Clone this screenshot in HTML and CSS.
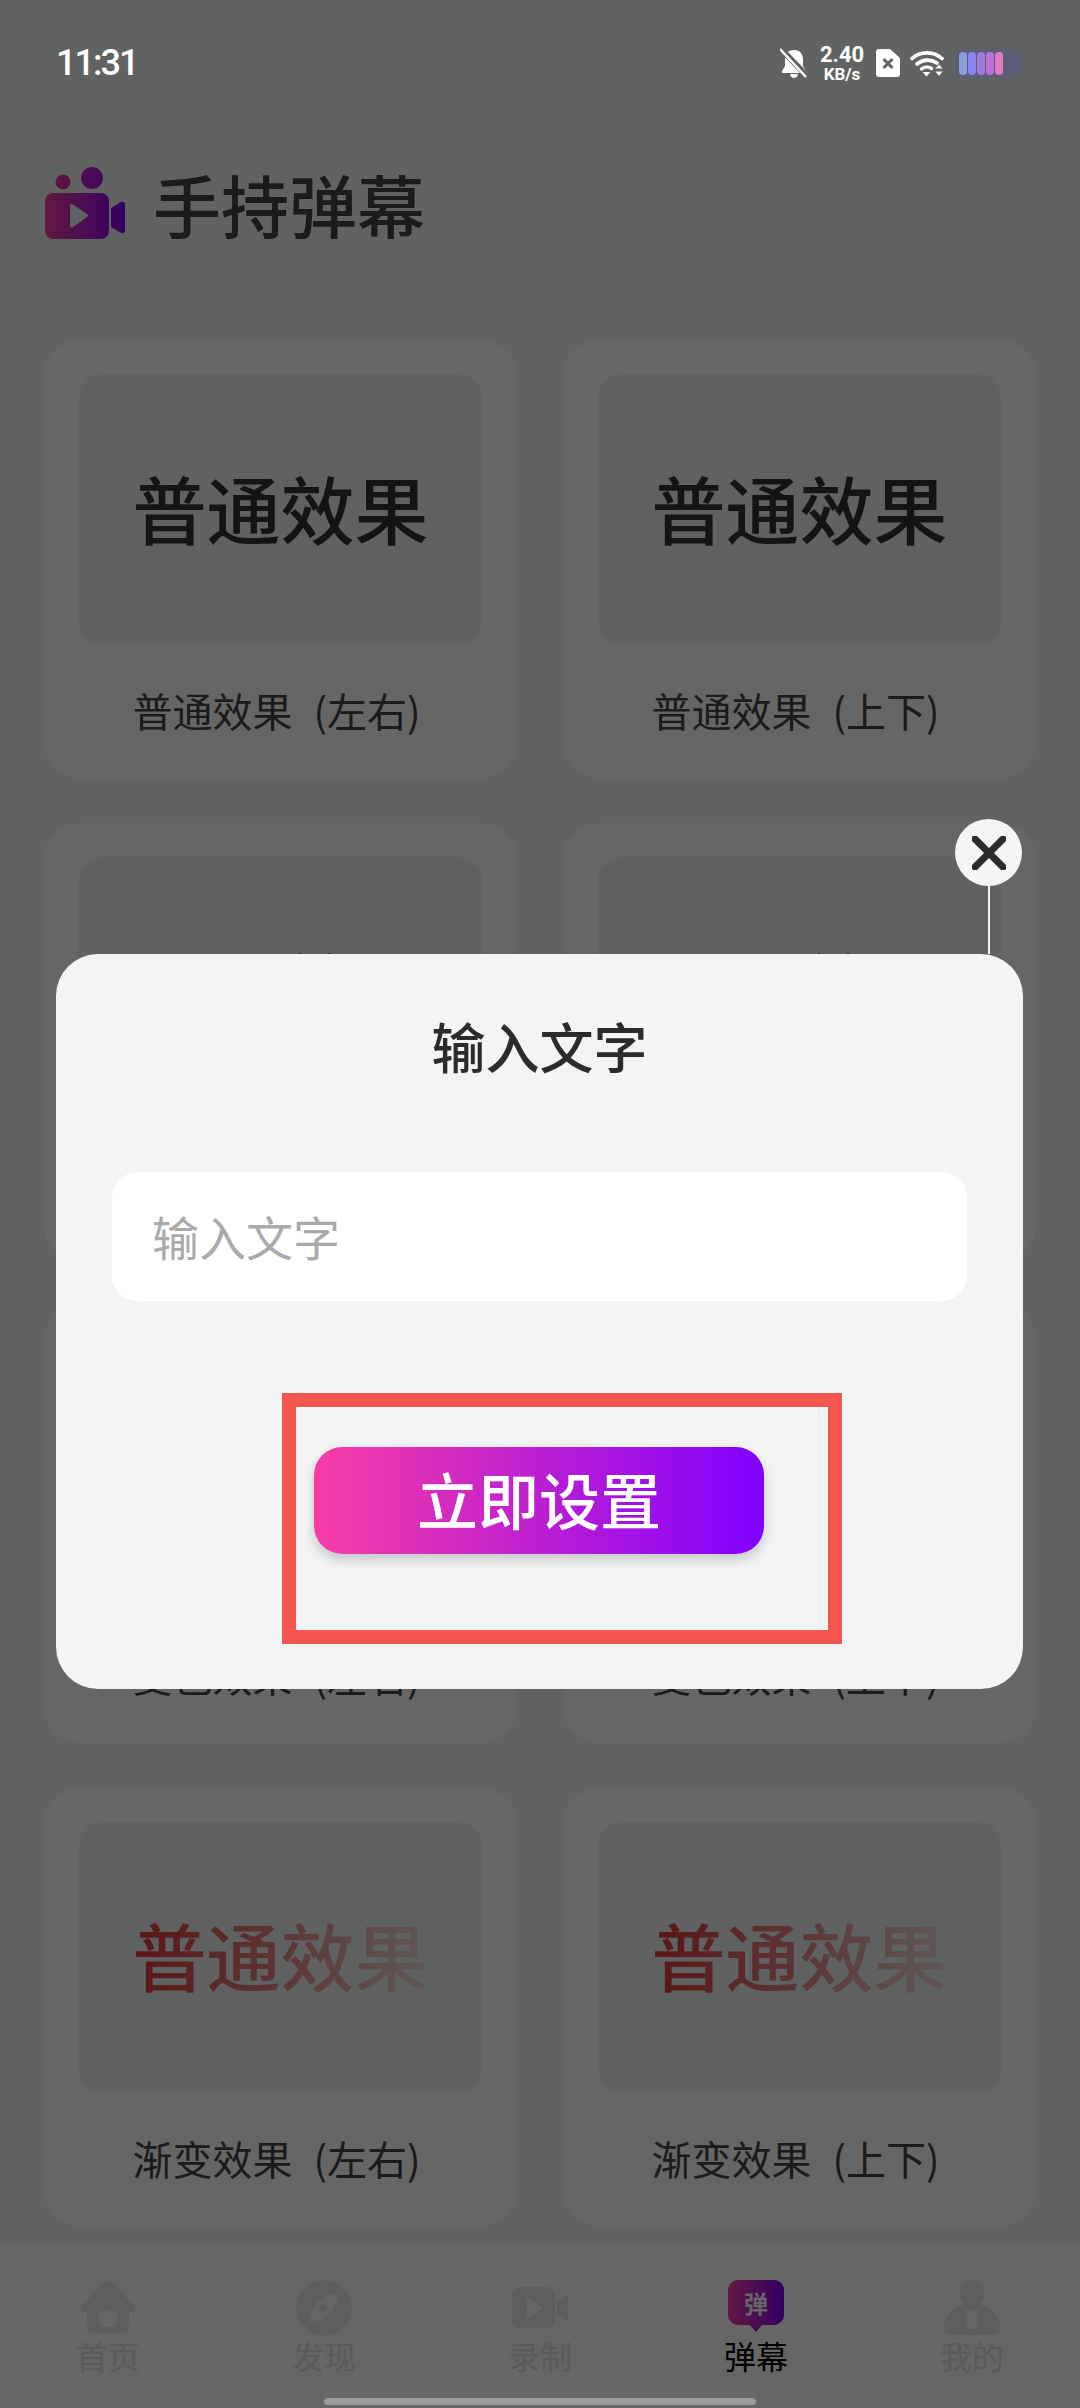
FILE: index.html
```html
<!DOCTYPE html>
<html lang="zh-CN">
<head>
    <meta charset="UTF-8">
    <meta name="viewport" content="width=device-width, initial-scale=1.0">
    <title>手持弹幕</title>
    <link rel="stylesheet" href="styles.css">
</head>
<body>
    <div class="page">
        <div class="status">
            <span class="time">11:31</span>
            <div class="status-icons">
                <svg class="ic-bell" width="28" height="30" viewBox="0 0 28 30">
                    <path d="M14 2c6 0 9 4 9 10v6l3 5c.6 1.3 0 2-1 2H3c-1 0-1.6-.7-1-2l3-5v-6c0-6 3-10 9-10z" fill="#fff"/>
                    <path d="M10 26c.5 2.500 2 4 4 4s3.500-1.500 4-4z" fill="#fff"/>
                    <path d="M1 1l26 27" stroke="#616362" stroke-width="6"/>
                    <path d="M0 1l26 28" stroke="#fff" stroke-width="2.500"/>
                </svg>
                <div class="speed"><b>2.40</b><span>KB/s</span></div>
                <svg width="24" height="28" viewBox="0 0 24 28">
                    <path d="M3 0h11l10 9v16a3 3 0 0 1-3 3H3a3 3 0 0 1-3-3V3a3 3 0 0 1 3-3z" fill="#fff"/>
                    <path d="M7.500 10l9 9M16.500 10l-9 9" stroke="#616362" stroke-width="3"/>
                </svg>
                <svg width="34" height="28" viewBox="0 0 34 28" fill="none">
                    <path d="M2 9.500C10 2 24 2 32 9.500" stroke="#fff" stroke-width="3.600" stroke-linecap="round"/>
                    <path d="M7 15c6-5 14-5 20-1" stroke="#fff" stroke-width="3.600" stroke-linecap="round"/>
                    <path d="M11.500 20c3-2.500 7-2.500 10-.5" stroke="#fff" stroke-width="3.400" stroke-linecap="round"/>
                    <path d="M12.500 23h8l-4 4.500zM29 15.500l3.500 4h-7zM25.500 22.500h7L29 27z" fill="#fff"/>
                </svg>
                <div class="battery">
                    <i class="b1"></i><i class="b2"></i><i class="b3"></i><i class="b4"></i><i class="b5"></i>
                </div>
            </div>
        </div>

        <header class="top">
            <svg class="logo" width="80" height="72" viewBox="0 0 80 72">
                <defs>
                    <linearGradient id="logoGrad" x1="0" y1="0" x2="1" y2="0">
                        <stop offset="0" stop-color="#f83ea0"/>
                        <stop offset="1" stop-color="#7f00ff"/>
                    </linearGradient>
                </defs>
                <path fill="url(#logoGrad)" d="M8 25h48a8 8 0 0 1 8 8v30a8 8 0 0 1-8 8H8a8 8 0 0 1-8-8V33a8 8 0 0 1 8-8zM66 40l10-6q4-1 4 3v25q0 4-4 3l-10-6zM18 6.500a7.500 7.500 0 1 1 0 15 7.500 7.500 0 0 1 0-15zM47 -1a11 11 0 1 1 0 22 11 11 0 0 1 0-22z"/>
                <path fill="#f3f7f5" d="M25 38q0-3 3-1.500L42 46q2 1.500 0 3L28 59q-3 1.500-3-1.500z"/>
            </svg>
            <h1>手持弹幕</h1>
        </header>

        <main class="grid">
            <div class="card">
                <div class="preview"><span>普通效果</span></div>
                <p>普通效果 (左右)</p>
            </div>
            <div class="card">
                <div class="preview"><span>普通效果</span></div>
                <p>普通效果 (上下)</p>
            </div>
            <div class="card">
                <div class="preview"><span class="shift">普通效果</span></div>
                <p>描边效果 (左右)</p>
            </div>
            <div class="card">
                <div class="preview"><span class="shift">普通效果</span></div>
                <p>描边效果 (上下)</p>
            </div>
            <div class="card">
                <div class="preview"><span>普通效果</span></div>
                <p>变色效果 (左右)</p>
            </div>
            <div class="card">
                <div class="preview"><span>普通效果</span></div>
                <p>变色效果 (上下)</p>
            </div>
            <div class="card">
                <div class="preview"><span class="fade">普通效果</span></div>
                <p>渐变效果 (左右)</p>
            </div>
            <div class="card">
                <div class="preview"><span class="fade">普通效果</span></div>
                <p>渐变效果 (上下)</p>
            </div>
        </main>

        <nav class="tabs">
            <div class="tab">
                <svg width="60" height="56" viewBox="0 0 60 56">
                    <path class="solid" d="M30 1q3 0 6 3l20 22q3 4-2 6h-3v14q0 7-7 7H16q-7 0-7-7V32H6q-5-2-2-6L24 4q3-3 6-3z"/>
                    <rect class="cut" x="20" y="30" width="20" height="17" rx="7"/>
                </svg>
                <span>首页</span>
            </div>
            <div class="tab">
                <svg width="60" height="56" viewBox="0 0 60 56">
                    <circle class="solid" cx="30" cy="28" r="28"/>
                    <path class="cut" d="M43 14q1-1 1 1-2 12-10 20-7 6-18 7-1 0-1-1 2-11 9-19 8-7 19-8z"/>
                    <circle class="solid" cx="29.500" cy="28" r="4"/>
                </svg>
                <span>发现</span>
            </div>
            <div class="tab">
                <svg width="60" height="56" viewBox="0 0 60 56">
                    <rect class="solid" x="2" y="7" width="43" height="41" rx="8"/>
                    <path class="solid" d="M47 21l9-6q2-1 2 2v22q0 3-2 2l-9-6z"/>
                    <path class="cut" d="M17 20q0-2 2-1l13 8q1.500 1 0 2l-13 8q-2 1-2-1z"/>
                </svg>
                <span>录制</span>
            </div>
            <div class="tab active">
                <div class="bubble">弹</div>
                <span>弹幕</span>
            </div>
            <div class="tab">
                <svg width="60" height="56" viewBox="0 0 60 56">
                    <ellipse class="solid" cx="30" cy="14" rx="12.500" ry="14"/>
                    <path class="solid" d="M30 24c16 0 28 10 28 23q0 8-8 8H10q-8 0-8-8c0-13 12-23 28-23z"/>
                    <rect class="cut" x="24" y="30" width="12" height="19" rx="6"/>
                </svg>
                <span>我的</span>
            </div>
        </nav>

        <div class="mask"></div>

        <div class="modal">
            <div class="close">
                <div class="close-btn">
                    <svg width="34" height="34" viewBox="0 0 34 34">
                        <path d="M3 3l28 28M31 3L3 31" stroke="#2b2b2b" stroke-width="7" stroke-linecap="round"/>
                    </svg>
                </div>
                <div class="close-line"></div>
            </div>
            <h2>输入文字</h2>
            <input class="text-input" type="text" placeholder="输入文字">
            <button class="set-btn">立即设置</button>
            <div class="highlight"></div>
        </div>

        <div class="home-bar"></div>
    </div>
</body>
</html>
```

FILE: styles.css
```css
* {
    box-sizing: border-box;
}

body {
    margin: 0;
    font-family: "Noto Sans CJK SC", "Noto Sans", sans-serif;
}

.page {
    position: relative;
    width: 1080px;
    height: 2408px;
    overflow: hidden;
    background: #f3f7f5;
    display: flex;
    flex-direction: column;
}

/* status bar sits above the dim layer */
.status {
    position: relative;
    z-index: 2;
    height: 100px;
    padding: 26px 59px 0 56px;
    display: flex;
    justify-content: space-between;
    align-items: flex-start;
    color: #fff;
}

.time {
    font-family: Roboto, sans-serif;
    font-size: 36px;
    font-weight: 500;
    letter-spacing: -2px;
    line-height: 74px;
    height: 74px;
}

.status-icons {
    display: flex;
    align-items: center;
    height: 74px;
    gap: 10px;
}

.speed {
    width: 46px;
    display: flex;
    flex-direction: column;
    align-items: center;
    font-family: Roboto, sans-serif;
    margin: 0 1px;
}

.speed b {
    font-size: 22px;
    font-weight: 700;
    line-height: 21px;
}

.speed span {
    font-size: 17px;
    font-weight: 700;
    line-height: 18px;
}

.battery {
    width: 65px;
    height: 27px;
    padding: 2px 3px;
    margin-left: 2px;
    display: flex;
    gap: 1px;
    background: #5a5e78;
    border-radius: 9px;
    box-shadow: 0 0 4px #5a5e78;
}

.battery i {
    width: 8px;
    height: 23px;
    border-radius: 4px;
}

.b1 { background: #8a9ee0; }
.b2 { background: #8b86f2; }
.b3 { background: #a678e2; }
.b4 { background: #bf72d6; }
.b5 { background: #e27cc0; }

.top {
    height: 208px;
    padding-left: 45px;
    display: flex;
    align-items: center;
    gap: 28px;
}

.logo {
    overflow: visible;
}

.top h1 {
    margin: 0;
    font-size: 68px;
    font-weight: 500;
    line-height: 80px;
    color: #444;
}

.grid {
    flex: 1;
    padding: 32px 44px 0 44px;
    display: grid;
    grid-template-columns: 1fr 1fr;
    grid-auto-rows: 438px;
    column-gap: 46px;
    row-gap: 44.500px;
    overflow: hidden;
}

.card {
    background: #fff;
    border-radius: 36px;
    padding: 34px 35px 0 35px;
}

.preview {
    height: 271px;
    padding-bottom: 6px;
    background: #f1f5f3;
    border-radius: 24px;
    display: flex;
    justify-content: center;
    align-items: center;
    font-size: 74px;
    font-weight: 500;
    line-height: 90px;
    color: #333;
}

.preview .shift {
    margin-bottom: 10px;
    background: linear-gradient(90deg, transparent 0, transparent 50%, #222 50%, #222 68%, #a5b43c 72%, #b8c04a 100%);
    -webkit-background-clip: text;
    background-clip: text;
    color: transparent;
}

.preview .fade {
    background: linear-gradient(90deg, #e23438, rgba(224, 40, 44, 0.12));
    -webkit-background-clip: text;
    background-clip: text;
    color: transparent;
}

.card p {
    margin: 40px 0 0 0;
    padding-right: 8px;
    font-size: 40px;
    word-spacing: 12px;
    line-height: 50px;
    color: #444;
    text-align: center;
    white-space: nowrap;
}

.tabs {
    flex: none;
    height: 165px;
    background: #fff;
    display: grid;
    grid-template-columns: repeat(5, 1fr);
}

.tab {
    padding-top: 37px;
    display: flex;
    flex-direction: column;
    align-items: center;
    font-size: 32px;
    line-height: 44px;
    color: #e4e4e4;
}

.tab span {
    margin-top: -3px;
}

.solid {
    fill: #ebebeb;
}

.cut {
    fill: #fff;
}

.tab.active {
    color: #000;
}

.bubble {
    position: relative;
    width: 56px;
    height: 45px;
    margin-bottom: 11px;
    border-radius: 10px;
    background: linear-gradient(90deg, #f83ea0, #7f00ff);
    color: #fff;
    font-size: 24px;
    font-weight: 700;
    line-height: 45px;
    text-align: center;
}

.bubble::after {
    content: "";
    position: absolute;
    left: 21px;
    bottom: -7px;
    border-left: 7px solid transparent;
    border-right: 7px solid transparent;
    border-top: 8px solid #b01ec8;
}

.mask {
    position: absolute;
    inset: 0;
    z-index: 1;
    background: rgba(0, 0, 0, 0.6);
}

.modal {
    position: absolute;
    z-index: 2;
    left: 56px;
    top: 954px;
    width: 967px;
    height: 735px;
    padding-top: 62px;
    background: #f3f4f6;
    border-radius: 42px;
    display: flex;
    flex-direction: column;
    align-items: center;
}

.modal h2 {
    margin: 0;
    font-size: 54px;
    font-weight: 500;
    line-height: 60px;
    color: #2b2b2b;
}

.close {
    position: absolute;
    left: 899px;
    top: -135px;
    display: flex;
    flex-direction: column;
    align-items: center;
}

.close-btn {
    width: 67px;
    height: 67px;
    border-radius: 50%;
    background: #f5f5f5;
    display: flex;
    justify-content: center;
    align-items: center;
}

.close-line {
    width: 2px;
    height: 68px;
    background: #f3f4f6;
}

.text-input {
    width: 855px;
    height: 129px;
    margin-top: 96px;
    padding: 0 40px 3px 40px;
    border: none;
    outline: none;
    border-radius: 26px;
    background: #fff;
    font-family: inherit;
    font-size: 47px;
}

.text-input::placeholder {
    color: #aaa;
}

.set-btn {
    width: 450px;
    height: 107px;
    margin-top: 146px;
    margin-left: -1px;
    padding: 0 0 5px 0;
    border: none;
    border-radius: 28px;
    background: linear-gradient(90deg, #f83ea5, #8000ff);
    box-shadow: 0 6px 12px rgba(0, 0, 0, 0.18);
    color: #fff;
    font-family: inherit;
    font-size: 61px;
    font-weight: 500;
}

/* annotation frame drawn over the dialog */
.highlight {
    position: absolute;
    left: 226px;
    top: 439px;
    width: 560px;
    height: 251px;
    border: 14px solid #f2564e;
}

.home-bar {
    position: absolute;
    z-index: 2;
    left: 324px;
    bottom: 3px;
    width: 432px;
    height: 7px;
    border-radius: 4px;
    background: #9a9a9a;
}
```
